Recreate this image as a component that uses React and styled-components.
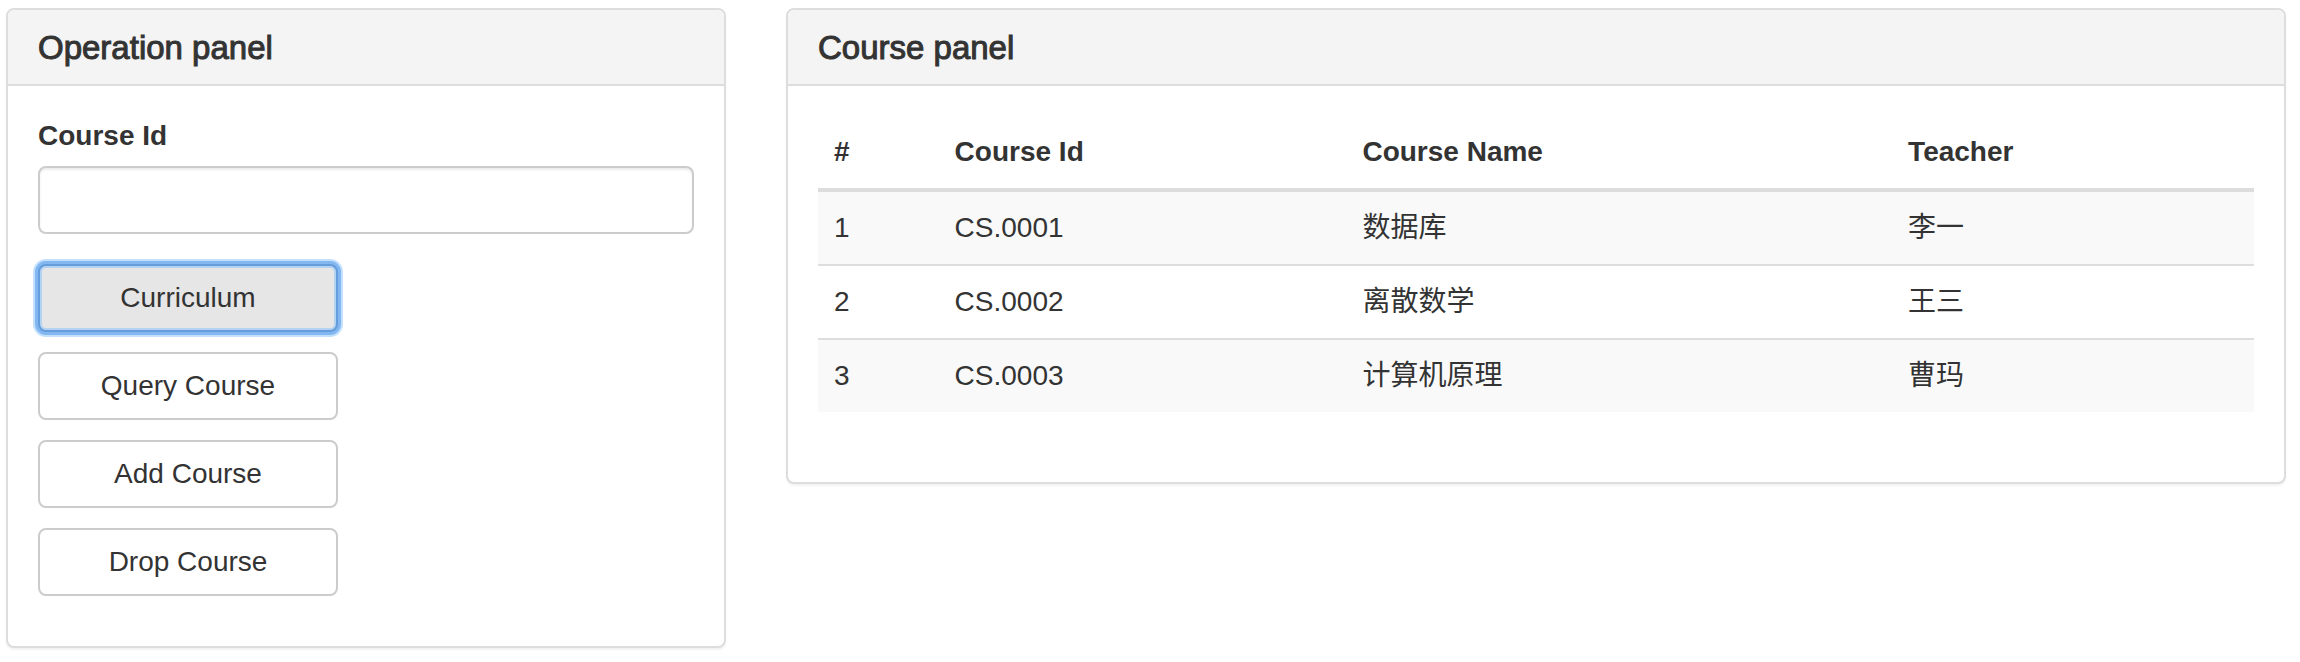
import React from "react";
import styled, { createGlobalStyle } from "styled-components";

const GlobalStyle = createGlobalStyle`
  *, *::before, *::after { box-sizing: border-box; }
  body {
    margin: 0;
    background: #fff;
    color: #333;
    font-family: "Liberation Sans", "Noto Sans CJK SC", sans-serif;
    font-size: 28px;
    line-height: 40px;
  }
`;

const Page = styled.main`
  display: grid;
  grid-template-columns: 12fr 25fr;
  align-items: start;
  gap: 60px;
  padding: 8px 14px 8px 6px;
`;

const Panel = styled.section`
  min-width: 0;
  border: 2px solid #ddd;
  border-radius: 8px;
  background: #fff;
  box-shadow: 0 2px 2px rgba(0, 0, 0, 0.05);
`;

const PanelHeading = styled.header`
  padding: 20px 30px 18px;
  border-bottom: 2px solid #ddd;
  border-radius: 6px 6px 0 0;
  background: #f4f4f4;
`;

const PanelTitle = styled.h3`
  margin: 0;
  font-size: 33px;
  font-weight: 400;
  line-height: 36px;
  -webkit-text-stroke: 1px currentColor;
`;

const PanelBody = styled.div`
  padding: 30px;
`;

const FormGroup = styled.div`
  display: flex;
  flex-direction: column;
  gap: 10px;
  margin-bottom: 30px;
`;

const Label = styled.label`
  font-weight: 700;
`;

const TextInput = styled.input`
  width: 100%;
  height: 68px;
  padding: 12px 24px;
  border: 2px solid #ccc;
  border-radius: 8px;
  background: #fff;
  color: #555;
  font: inherit;
  box-shadow: inset 0 2px 2px rgba(0, 0, 0, 0.075);
`;

const ButtonList = styled.div`
  display: flex;
  flex-direction: column;
  align-items: flex-start;
  gap: 20px;
  margin-bottom: 20px;
`;

const Button = styled.button`
  width: 300px;
  height: 68px;
  padding: 12px 24px;
  border: 2px solid ${(p) => (p.$active ? "#659ddb" : "#ccc")};
  border-radius: 8px;
  background: ${(p) => (p.$active ? "#e6e6e6" : "#fff")};
  color: #333;
  font: inherit;
  cursor: pointer;
  box-shadow: ${(p) =>
    p.$active
      ? "inset 0 0 0 2px #b4d3f3, 0 0 0 3px #82b7f1, 0 0 0 5px #c3e0fc"
      : "none"};
`;

const Table = styled.table`
  width: 100%;
  margin-bottom: 40px;
  border-collapse: separate;
  border-spacing: 0;
  table-layout: fixed;
  text-align: left;
`;

const Column = styled.col`
  width: ${(p) => p.$share}%;
`;

const HeadCell = styled.th`
  padding: 16px;
  border-bottom: 4px solid #ddd;
  font-weight: 700;
`;

const Row = styled.tr`
  &:nth-child(odd) { background: #f9f9f9; }
  & + & > td { border-top: 2px solid #ddd; }
`;

const Cell = styled.td`
  padding: 16px;
`;

const operations = ["Curriculum", "Query Course", "Add Course", "Drop Course"];
const columns = [
  { title: "#", share: 8.4 },
  { title: "Course Id", share: 28.4 },
  { title: "Course Name", share: 38 },
  { title: "Teacher", share: 25.2 },
];
const courses = [
  { id: "CS.0001", name: "数据库", teacher: "李一" },
  { id: "CS.0002", name: "离散数学", teacher: "王三" },
  { id: "CS.0003", name: "计算机原理", teacher: "曹玛" },
];

export default function App() {
  const [active, setActive] = React.useState("Curriculum");
  return (
    <>
      <GlobalStyle />
      <Page>
        <Panel>
          <PanelHeading>
            <PanelTitle>Operation panel</PanelTitle>
          </PanelHeading>
          <PanelBody>
            <FormGroup>
              <Label htmlFor="course-id">Course Id</Label>
              <TextInput id="course-id" type="text" />
            </FormGroup>
            <ButtonList>
              {operations.map((name) => (
                <Button
                  key={name}
                  type="button"
                  $active={name === active}
                  onClick={() => setActive(name)}
                >
                  {name}
                </Button>
              ))}
            </ButtonList>
          </PanelBody>
        </Panel>
        <Panel>
          <PanelHeading>
            <PanelTitle>Course panel</PanelTitle>
          </PanelHeading>
          <PanelBody>
            <Table>
              <colgroup>
                {columns.map((column) => (
                  <Column key={column.title} $share={column.share} />
                ))}
              </colgroup>
              <thead>
                <tr>
                  {columns.map((column) => (
                    <HeadCell key={column.title} scope="col">{column.title}</HeadCell>
                  ))}
                </tr>
              </thead>
              <tbody lang="zh-CN">
                {courses.map((course, i) => (
                  <Row key={course.id}>
                    <Cell>{i + 1}</Cell>
                    <Cell>{course.id}</Cell>
                    <Cell>{course.name}</Cell>
                    <Cell>{course.teacher}</Cell>
                  </Row>
                ))}
              </tbody>
            </Table>
          </PanelBody>
        </Panel>
      </Page>
    </>
  );
}
